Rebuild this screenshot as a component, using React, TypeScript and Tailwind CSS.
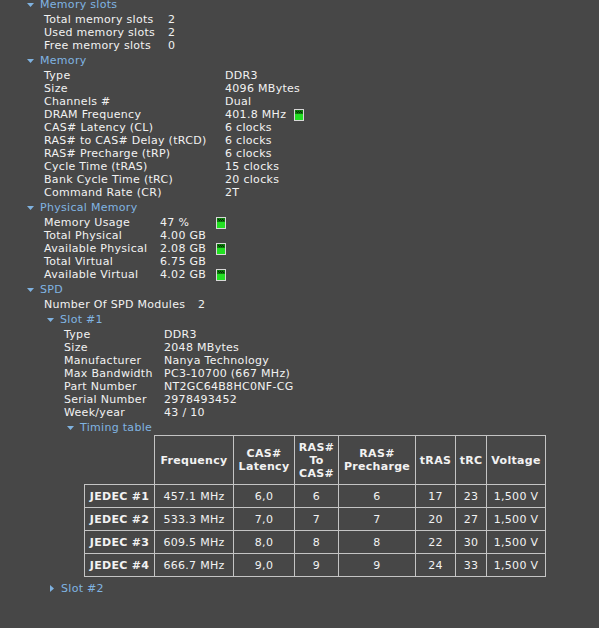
import React from 'react'

const FONT = { fontFamily: '"DejaVu Sans", Verdana, sans-serif' }

function Arrow({ open = true }: { open?: boolean }) {
  return open ? (
    <svg width="7" height="4" viewBox="0 0 7 4" className="block">
      <path d="M0 0H7L3.5 4Z" fill="#7fb2e0" />
    </svg>
  ) : (
    <svg width="4" height="7" viewBox="0 0 4 7" className="block">
      <path d="M0 0L4 3.5L0 7Z" fill="#7fb2e0" />
    </svg>
  )
}

function Header({ label, indent, open = true }: { label: string; indent: string; open?: boolean }) {
  return (
    <div className={`flex h-[17px] items-center text-[#80b4e2] ${indent}`}>
      <span className={`flex shrink-0 items-center ${open ? 'w-[13px]' : 'w-[11px]'}`}>
        <Arrow open={open} />
      </span>
      <span>{label}</span>
    </div>
  )
}

function Chip() {
  return (
    <svg width="10" height="12" viewBox="0 0 10 12" className="block">
      <rect x="0.5" y="0.5" width="9" height="11" fill="#22e022" stroke="#d8d8d8" />
      <rect x="1" y="1" width="8" height="4" fill="#0c7a0c" />
      <path d="M2 2h1v1H2zM4 2h1v1H4zM6 2h1v1H6zM3 3h1v1H3zM5 3h1v1H5zM7 3h1v1H7z" fill="#042c04" />
    </svg>
  )
}

type Row = { label: string; value: string; chip?: boolean }

function Rows({ rows, indent, labelW, valueW }: { rows: Row[]; indent: string; labelW: string; valueW?: string }) {
  return (
    <div className={indent}>
      {rows.map((r) => (
        <div key={r.label} className="flex h-[13px] items-center whitespace-nowrap">
          <span className={`shrink-0 ${labelW}`}>{r.label}</span>
          <span className={`shrink-0 ${valueW ?? ''}`}>{r.value}</span>
          {r.chip && <Chip />}
        </div>
      ))}
    </div>
  )
}

const SLOTS: Row[] = [
  { label: 'Total memory slots', value: '2' },
  { label: 'Used memory slots', value: '2' },
  { label: 'Free memory slots', value: '0' },
]

const MEMORY: Row[] = [
  { label: 'Type', value: 'DDR3' },
  { label: 'Size', value: '4096 MBytes' },
  { label: 'Channels #', value: 'Dual' },
  { label: 'DRAM Frequency', value: '401.8 MHz', chip: true },
  { label: 'CAS# Latency (CL)', value: '6 clocks' },
  { label: 'RAS# to CAS# Delay (tRCD)', value: '6 clocks' },
  { label: 'RAS# Precharge (tRP)', value: '6 clocks' },
  { label: 'Cycle Time (tRAS)', value: '15 clocks' },
  { label: 'Bank Cycle Time (tRC)', value: '20 clocks' },
  { label: 'Command Rate (CR)', value: '2T' },
]

const PHYSICAL: Row[] = [
  { label: 'Memory Usage', value: '47 %', chip: true },
  { label: 'Total Physical', value: '4.00 GB' },
  { label: 'Available Physical', value: '2.08 GB', chip: true },
  { label: 'Total Virtual', value: '6.75 GB' },
  { label: 'Available Virtual', value: '4.02 GB', chip: true },
]

const SLOT1: Row[] = [
  { label: 'Type', value: 'DDR3' },
  { label: 'Size', value: '2048 MBytes' },
  { label: 'Manufacturer', value: 'Nanya Technology' },
  { label: 'Max Bandwidth', value: 'PC3-10700 (667 MHz)' },
  { label: 'Part Number', value: 'NT2GC64B8HC0NF-CG' },
  { label: 'Serial Number', value: '2978493452' },
  { label: 'Week/year', value: '43 / 10' },
]

const TIMINGS = [
  ['JEDEC #1', '457.1 MHz', '6,0', '6', '6', '17', '23', '1,500 V'],
  ['JEDEC #2', '533.3 MHz', '7,0', '7', '7', '20', '27', '1,500 V'],
  ['JEDEC #3', '609.5 MHz', '8,0', '8', '8', '22', '30', '1,500 V'],
  ['JEDEC #4', '666.7 MHz', '9,0', '9', '9', '24', '33', '1,500 V'],
]

const HEADS = ['Frequency', 'CAS#\nLatency', 'RAS#\nTo\nCAS#', 'RAS#\nPrecharge', 'tRAS', 'tRC', 'Voltage']

function TimingTable() {
  return (
    <table className="-mt-[1px] ml-[84px] w-[461px] table-fixed border-collapse text-center">
      <colgroup>
        <col className="w-[70px]" />
        <col className="w-[79px]" />
        <col className="w-[61px]" />
        <col className="w-[44px]" />
        <col className="w-[77px]" />
        <col className="w-[40px]" />
        <col className="w-[31px]" />
        <col className="w-[59px]" />
      </colgroup>
      <thead>
        <tr className="h-[49px]">
          <th className="p-0" />
          {HEADS.map((h) => (
            <th key={h} className="whitespace-pre-line border border-[#c4c4c4] p-0 font-bold leading-[13px]">
              {h}
            </th>
          ))}
        </tr>
      </thead>
      <tbody>
        {TIMINGS.map((row) => (
          <tr key={row[0]} className="h-[23px]">
            {row.map((c, i) => (
              <td key={i} className={`whitespace-nowrap border border-[#c4c4c4] p-0 ${i === 0 ? 'font-bold' : ''}`}>
                {c}
              </td>
            ))}
          </tr>
        ))}
      </tbody>
    </table>
  )
}

export default function App() {
  return (
    <div
      className="h-[628px] w-full overflow-hidden bg-[#474747] text-[11px] leading-[13px] tracking-[0.3px] text-[#f2f2f2]"
      style={FONT}
    >
      <div className="-mt-[4px]">
        <Header label="Memory slots" indent="pl-[27px]" />
        <Rows rows={SLOTS} indent="pl-[44px]" labelW="w-[124px]" />

        <Header label="Memory" indent="pl-[27px]" />
        <Rows rows={MEMORY} indent="pl-[44px]" labelW="w-[181px]" valueW="w-[69px]" />

        <Header label="Physical Memory" indent="pl-[27px]" />
        <Rows rows={PHYSICAL} indent="pl-[44px]" labelW="w-[116px]" valueW="w-[56px]" />

        <Header label="SPD" indent="pl-[27px]" />
        <Rows rows={[{ label: 'Number Of SPD Modules', value: '2' }]} indent="pl-[44px]" labelW="w-[154px]" />

        <Header label="Slot #1" indent="pl-[47px]" />
        <Rows rows={SLOT1} indent="pl-[64px]" labelW="w-[100px]" />

        <Header label="Timing table" indent="pl-[67px]" />
        <TimingTable />

        <div className="mt-[3px]">
          <Header label="Slot #2" indent="pl-[50px]" open={false} />
        </div>
      </div>
    </div>
  )
}
